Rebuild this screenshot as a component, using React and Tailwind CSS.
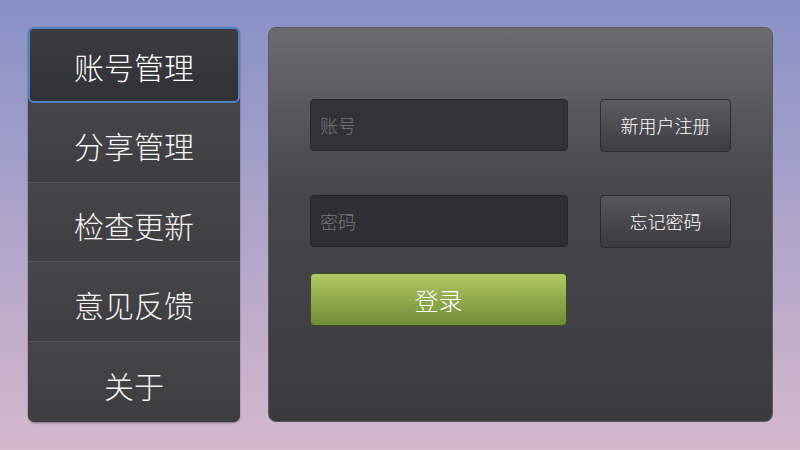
export default function App() {
  const menu = ["分享管理", "检查更新", "意见反馈", "关于"];

  return (
    <div
      className="w-[800px] h-[450px] flex gap-[28px] pl-[28px] pt-[27px] bg-gradient-to-b from-[#8790c6] to-[#d6b8cc]"
      style={{ fontFamily: '"Noto Sans CJK SC", "Noto Sans", sans-serif' }}
    >
      <div className="w-[212px] h-[395px] rounded-[7px] bg-[#403f42] flex flex-col shadow-[0_1px_2px_rgba(0,0,0,0.4)]">
        <div className="h-[76px] rounded-[6px] border-2 border-[#4f84c0] bg-gradient-to-b from-[#3c3b3f] to-[#323135] flex items-center justify-center pt-[3px] text-[30px] font-light text-white">
          账号管理
        </div>
        {menu.map((label, i) => (
          <div
            key={label}
            className={
              "h-[80px] flex items-center justify-center pt-[6px] text-[30px] font-light text-[#f4f4f4] bg-gradient-to-b from-[#464548] to-[#3e3d40] " +
              (i < menu.length - 1 ? "border-b border-[#555458]" : "rounded-b-[7px]")
            }
          >
            {label}
          </div>
        ))}
      </div>

      <div className="w-[505px] h-[395px] rounded-[8px] border border-[#5a5a5e] bg-gradient-to-b from-[#6c6c70] via-[#48474a] via-40% to-[#3b3a3d] pl-[41px] pt-[71px]">
        <div className="flex gap-[32px]">
          <div className="w-[258px] h-[52px] rounded-[4px] bg-[#333236] border border-[#2a292c] flex items-center pl-[9px] text-[18px] font-light text-[#7a797c]">
            账号
          </div>
          <div className="w-[131px] h-[53px] rounded-[4px] bg-gradient-to-b from-[#5d5c60] to-[#3e3d41] border border-[#2e2d30] flex items-center justify-center text-[18px] font-light text-white">
            新用户注册
          </div>
        </div>
        <div className="flex gap-[32px] mt-[43px]">
          <div className="w-[258px] h-[52px] rounded-[4px] bg-[#2f2e32] border border-[#262528] flex items-center pl-[9px] text-[18px] font-light text-[#79787b]">
            密码
          </div>
          <div className="w-[131px] h-[53px] rounded-[4px] bg-gradient-to-b from-[#59585c] to-[#3a393d] border border-[#2b2a2d] flex items-center justify-center text-[18px] font-light text-white">
            忘记密码
          </div>
        </div>
        <div className="mt-[25px] w-[257px] h-[53px] rounded-[4px] bg-gradient-to-b from-[#b3c862] to-[#6f8c37] border border-[#3f4a25] flex items-center justify-center text-[24px] font-light text-white">
          登录
        </div>
      </div>
    </div>
  );
}
